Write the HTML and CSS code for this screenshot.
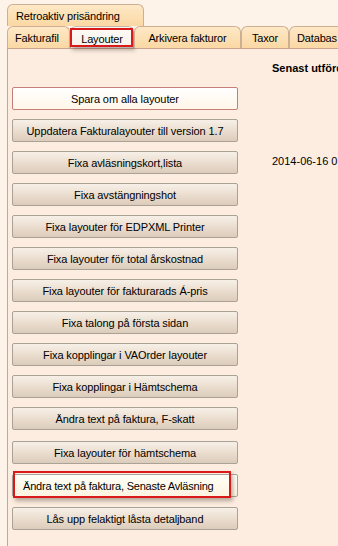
FILE: index.html
```html
<!DOCTYPE html>
<html lang="sv">
<head>
<meta charset="utf-8">
<title>Layouter</title>
<link rel="stylesheet" href="styles.css">
</head>
<body>
<div class="window">
  <div class="tabs">
    <div class="tabrow">
      <div class="tab tab-retro">Retroaktiv prisändring</div>
    </div>
    <div class="tabrow">
      <div class="tab tab-faktura">Fakturafil</div>
      <div class="tab tab-layout active">Layouter<span class="mark mark-tab"></span></div>
      <div class="tab tab-arkiv">Arkivera fakturor</div>
      <div class="tab tab-taxor">Taxor</div>
      <div class="tab tab-databas">Databas</div>
    </div>
  </div>
  <div class="panel">
    <div class="buttons">
      <div class="btn btn-default">Spara om alla layouter</div>
      <div class="btn">Uppdatera Fakturalayouter till version 1.7</div>
      <div class="btn">Fixa avläsningskort,lista</div>
      <div class="btn">Fixa avstängningshot</div>
      <div class="btn">Fixa layouter för EDPXML Printer</div>
      <div class="btn">Fixa layouter för total årskostnad</div>
      <div class="btn">Fixa layouter för fakturarads Á-pris</div>
      <div class="btn">Fixa talong på första sidan</div>
      <div class="btn">Fixa kopplingar i VAOrder layouter</div>
      <div class="btn">Fixa kopplingar i Hämtschema</div>
      <div class="btn">Ändra text på faktura, F-skatt</div>
      <div class="btn gap-11">Fixa layouter för hämtschema</div>
      <div class="btn btn-focus gap-10">Ändra text på faktura, Senaste Avläsning<span class="mark mark-btn"></span></div>
      <div class="btn gap-10">Lås upp felaktigt låsta detaljband</div>
    </div>
    <div class="info">
      <div class="info-head">Senast utförd</div>
      <div class="info-date">2014-06-16 07</div>
    </div>
  </div>
</div>
</body>
</html>
```
FILE: styles.css
```css
html, body {
  margin: 0;
  padding: 0;
}
body {
  width: 338px;
  height: 546px;
  overflow: hidden;
  background: #fef3e8;
  font-family: "Liberation Sans", Arial, sans-serif;
  font-size: 11px;
  color: #000;
}
.window {
  padding: 4px 0 0 7px;
  height: 542px;
  box-sizing: border-box;
}
.tabs {
  display: flex;
  flex-direction: column;
}
.tabrow {
  display: flex;
  height: 22px;
  white-space: nowrap;
}
.tab {
  position: relative;
  box-sizing: border-box;
  height: 22px;
  flex: none;
  border: 1px solid #cdb094;
  border-bottom: none;
  border-radius: 6px 6px 0 0;
  background: linear-gradient(#fee8c6, #fbd8a4);
  padding-top: 5px;
  line-height: 13px;
  text-align: center;
  letter-spacing: -0.15px;
}
.tab-retro {
  width: 137px;
  text-align: left;
  padding-left: 8px;
}
.tab-faktura {
  width: 63px;
  text-align: left;
  padding-left: 7px;
}
.tab-layout {
  width: 64px;
  background: linear-gradient(#fdfbf7, #f6f1ea);
  border-color: #c9b9a8;
  padding-top: 6px;
}
.tab-arkiv {
  width: 107px;
}
.tab-taxor {
  width: 48px;
}
.tab-databas {
  width: 60px;
  text-align: left;
  padding-left: 7px;
}
.panel {
  display: flex;
  height: 498px;
  box-sizing: border-box;
  border-top: 1px solid #c9a491;
  border-left: 1px solid #c9a491;
  background: #fcede0;
  padding-left: 4px;
  white-space: nowrap;
  overflow: hidden;
}
.buttons {
  display: flex;
  flex-direction: column;
  padding-top: 38px;
  flex: none;
}
.btn {
  position: relative;
  box-sizing: border-box;
  width: 226px;
  height: 23px;
  margin-bottom: 9px;
  border: 1px solid #aaa197;
  border-radius: 2px;
  background: linear-gradient(#f7f0e8, #eadccd 55%, #dbccbb);
  display: flex;
  align-items: center;
  justify-content: center;
  letter-spacing: -0.1px;
}
.btn-default {
  border-color: #c57f78;
  background: linear-gradient(#ffffff, #fff6e8);
}
.btn-focus {
  justify-content: flex-start;
  padding-left: 10px;
  letter-spacing: -0.2px;
  background: linear-gradient(#fffef6, #fdf4e0);
}
.gap-11 {
  margin-top: 2px;
}
.gap-10 {
  margin-top: 1px;
}
.mark {
  position: absolute;
  box-sizing: border-box;
  border: 2px solid #d81a1a;
  box-shadow: 2px 3px 4px rgba(60, 40, 30, 0.35);
  pointer-events: none;
}
.mark-tab {
  left: -1px;
  top: 1px;
  width: 63px;
  height: 19px;
}
.mark-btn {
  left: 0px;
  top: -4px;
  width: 218px;
  height: 27px;
}
.info {
  margin-left: 34px;
  padding-top: 13px;
  line-height: 13px;
}
.info-head {
  font-weight: bold;
}
.info-date {
  margin-top: 80px;
}
```
